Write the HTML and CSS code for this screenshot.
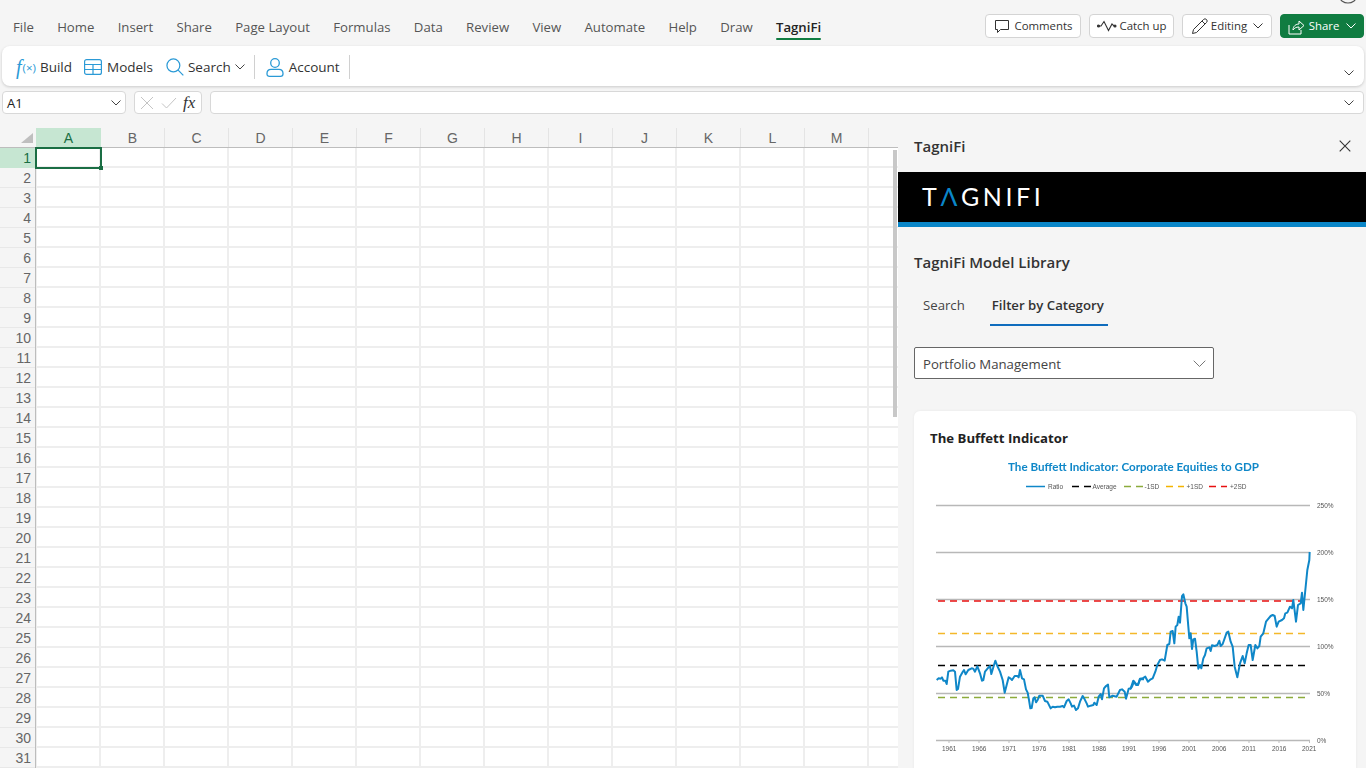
FILE: index.html
```html
<!DOCTYPE html>
<html lang="en">
<head>
<meta charset="utf-8">
<title>TagniFi - Excel</title>
<link rel="stylesheet" href="styles.css">
</head>
<body>
<div class="app">
  <svg class="corner-glyph" width="24" height="6" viewBox="0 0 24 6"><ellipse cx="12" cy="-3" rx="8" ry="6" fill="none" stroke="#555" stroke-width="1.2"/></svg>
  <header class="topbar">
    <nav class="tabs">
      <span class="tab">File</span><span class="tab">Home</span><span class="tab">Insert</span><span class="tab">Share</span><span class="tab">Page Layout</span><span class="tab">Formulas</span><span class="tab">Data</span><span class="tab">Review</span><span class="tab">View</span><span class="tab">Automate</span><span class="tab">Help</span><span class="tab">Draw</span><span class="tab tab-active">TagniFi</span>
    </nav>
    <div class="actions">
      <button class="act act-comments">
        <svg width="16" height="16" viewBox="0 0 16 16" fill="none" stroke="#333" stroke-width="1"><path d="M1.5 2.5h13v9H6.5l-3 3v-3h-2z"/></svg><span>Comments</span></button>
      <button class="act act-catch">
        <svg width="20" height="12" viewBox="0 0 20 12" fill="none" stroke="#333" stroke-width="1.1"><path d="M1 6h3l3-4.5 4.5 9L15 4l2 2h2"/><circle cx="1.5" cy="6" r="1" fill="#333"/><circle cx="18" cy="6" r="1" fill="#333"/></svg><span>Catch up</span></button>
      <button class="act act-edit">
        <svg width="17" height="17" viewBox="0 0 17 17" fill="none" stroke="#333" stroke-width="1"><path d="M1.5 15.500l1-4L12.500 1.500a1.600 1.600 0 0 1 3 3L5.500 14.500z"/><path d="M11 3l3 3"/></svg><span>Editing</span><svg class="chev" width="10" height="6" viewBox="0 0 10 6" fill="none" stroke="#333"><path d="M.5.5 5 5 9.500.5"/></svg></button>
      <button class="act act-share">
        <svg width="17" height="17" viewBox="0 0 17 17" fill="none" stroke="#fff" stroke-width="1"><path d="M1 7v9h12v-4"/><path d="M5 12c0-4 3-6 6-6V3l5 4.500-5 4.500V9c-3 0-4.500 1-6 3z"/></svg><span>Share</span><svg class="chev" width="10" height="6" viewBox="0 0 10 6" fill="none" stroke="#fff"><path d="M.5.5 5 5 9.500.5"/></svg></button>
    </div>
  </header>

  <section class="ribbon">
    <div class="rib-item rib-build"><span class="fx-icon"><i class="fx-f">f</i><span class="fx-x">(×)</span></span>Build</div>
    <div class="rib-item rib-models">
      <svg width="18" height="16" viewBox="0 0 18 16" fill="none" stroke="#2b9ad6" stroke-width="1.2"><rect x=".6" y=".6" width="16.800" height="14.800" rx="2"/><path d="M.6 5.500h16.800M.6 10.500h16.800M9 5.500v9.900"/></svg>Models</div>
    <div class="rib-item rib-search">
      <svg width="18" height="18" viewBox="0 0 19 19" fill="none" stroke="#2b9ad6" stroke-width="1.300"><circle cx="7.800" cy="7.800" r="6.800"/><path d="M12.800 12.800l5.500 5.500"/></svg>Search<svg class="rib-chev" width="10" height="6" viewBox="0 0 10 6" fill="none" stroke="#444"><path d="M.5.5 5 5 9.500.5"/></svg></div>
    <span class="rib-div"></span>
    <div class="rib-item rib-account">
      <svg width="18" height="19" viewBox="0 0 18 19" fill="none" stroke="#2b9ad6" stroke-width="1.300"><circle cx="9" cy="5" r="4.300"/><path d="M1 15.500c0-3 2-4.200 4-4.200h8c2 0 4 1.200 4 4.200v.5c0 1.500-1 2.300-2.500 2.300h-11C2 18.300 1 17.500 1 16z"/></svg>Account</div>
    <span class="rib-div rib-div-last"></span>
    <svg class="rib-more" width="10" height="6" viewBox="0 0 10 6" fill="none" stroke="#444"><path d="M.5.5 5 5 9.500.5"/></svg>
  </section>

  <section class="formula">
    <div class="namebox"><span>A1</span><svg width="10" height="6" viewBox="0 0 10 6" fill="none" stroke="#444"><path d="M.5.5 5 5 9.500.5"/></svg></div>
    <div class="fxbox">
      <svg width="14" height="14" viewBox="0 0 14 14" fill="none" stroke="#c4c4c4"><path d="M1 1l12 12M13 1 1 13"/></svg>
      <svg width="16" height="12" viewBox="0 0 16 12" fill="none" stroke="#c4c4c4"><path d="M1 6.500 5.500 11 15 1"/></svg>
      <span class="fxbox-fx">fx</span>
    </div>
    <div class="finput"><svg width="10" height="6" viewBox="0 0 10 6" fill="none" stroke="#444"><path d="M.5.5 5 5 9.500.5"/></svg></div>
  </section>

  <main class="workspace">
    <section class="sheet">
      <div class="colhead">
        <div class="corner"><span class="corner-tri"></span></div>
        <div class="col col-sel">A</div><div class="col">B</div><div class="col">C</div><div class="col">D</div><div class="col">E</div><div class="col">F</div><div class="col">G</div><div class="col">H</div><div class="col">I</div><div class="col">J</div><div class="col">K</div><div class="col">L</div><div class="col">M</div>
      </div>
      <div class="sheetbody">
        <div class="rowhead">
          <div class="row row-sel">1</div><div class="row">2</div><div class="row">3</div><div class="row">4</div><div class="row">5</div><div class="row">6</div><div class="row">7</div><div class="row">8</div><div class="row">9</div><div class="row">10</div><div class="row">11</div><div class="row">12</div><div class="row">13</div><div class="row">14</div><div class="row">15</div><div class="row">16</div><div class="row">17</div><div class="row">18</div><div class="row">19</div><div class="row">20</div><div class="row">21</div><div class="row">22</div><div class="row">23</div><div class="row">24</div><div class="row">25</div><div class="row">26</div><div class="row">27</div><div class="row">28</div><div class="row">29</div><div class="row">30</div><div class="row">31</div>
        </div>
        <div class="cells">
          <div class="selection"><span class="handle"></span></div>
          <div class="vscroll"></div>
        </div>
      </div>
    </section>

    <aside class="pane">
      <div class="pane-head"><span class="pane-title">TagniFi</span>
        <svg width="12" height="12" viewBox="0 0 12 12" fill="none" stroke="#333" stroke-width="1.100"><path d="M.7.7l10.600 10.600M11.300.7.700 11.300"/></svg></div>
      <div class="banner"><span class="logo">T<span class="logo-a">Λ</span>GNIFI</span></div>
      <h2 class="lib-title">TagniFi Model Library</h2>
      <div class="pivot"><span class="pivot-item">Search</span><span class="pivot-item pivot-on">Filter by Category</span></div>
      <div class="select"><span>Portfolio Management</span><svg width="13" height="8" viewBox="0 0 13 8" fill="none" stroke="#777"><path d="M.7.7l5.800 5.800L12.300.7"/></svg></div>
      <article class="card">
        <h3 class="card-title">The Buffett Indicator</h3>
        <svg class="chart" width="410" height="310" viewBox="930 458 410 310">
          <text class="c-title" x="1008" y="471" textLength="251" lengthAdjust="spacingAndGlyphs">The Buffett Indicator: Corporate Equities to GDP</text>
          <g class="legend">
            <path stroke="#0f87c8" stroke-width="1.500" d="M1026 486.500h19"/>
            <path stroke="#000" stroke-width="1.300" d="M1072 486.500h7M1084 486.500h7"/>
            <path stroke="#8cab3c" stroke-width="1.300" d="M1124 486.500h7M1136 486.500h7"/>
            <path stroke="#f4b400" stroke-width="1.300" d="M1166 486.500h7M1178 486.500h6"/>
            <path stroke="#e81010" stroke-width="1.300" d="M1209 486.500h7M1221 486.500h6"/>
            <text class="c-leg" x="1048" y="489">Ratio</text>
            <text class="c-leg" x="1092.500" y="489">Average</text>
            <text class="c-leg" x="1144.500" y="489">-1SD</text>
            <text class="c-leg" x="1186.500" y="489">+1SD</text>
            <text class="c-leg" x="1230" y="489">+2SD</text>
          </g>
          <path stroke="#b8b8b8" stroke-width="1.300" fill="none" d="M936 505.500h374M936 552.500h374M936 599.500h374M936 646.500h374M936 693.500h374M936 740.500h374"/>
          <path stroke="#bdbdbd" stroke-width="1" fill="none" d="M949 740v3M979 740v3M1009 740v3M1039 740v3M1069 740v3M1099 740v3M1129 740v3M1159 740v3M1189 740v3M1219 740v3M1249 740v3M1279 740v3M1309.500 740v3"/>
          <g class="dashes">
            <path stroke="#e81010" d="M938 601h372"/>
            <path stroke="#f4b82a" d="M938 633.500h372"/>
            <path stroke="#000" d="M938 665.500h372"/>
            <path stroke="#8cab3c" d="M938 697.500h372"/>
          </g>
          <g transform="translate(920 590) scale(.33333)">
            <polyline class="c-line" points="50,270 56,265 62,266 66,262 70,272 76,272 80,282 85,245 92,242 100,241 105,245 110,300 114,297 120,260 128,246 132,240 137,253 145,240 155,235 160,236 165,245 172,229 180,250 186,272 190,270 195,245 205,233 210,228 214,252 220,232 226,212 232,228 240,245 248,270 254,308 260,285 266,262 272,266 276,270 284,258 292,258 296,262 300,240 306,265 312,268 318,298 323,308 327,330 331,355 335,354 340,325 344,322 348,337 353,330 358,317 368,317 375,333 382,335 392,355 398,350 405,352 412,350 420,350 428,348 432,352 440,333 446,328 452,340 456,350 462,347 468,360 474,355 480,335 488,318 494,328 500,340 504,350 512,347 520,345 523,338 530,345 536,320 542,312 546,328 552,295 558,288 564,284 568,322 578,317 590,320 600,300 606,298 614,305 618,326 626,296 632,295 640,272 648,282 654,284 660,268 672,268"/>
          </g>
          <g transform="translate(1130 570) scale(.33333)">
            <polyline class="c-line" points="0,358 6,350 12,335 18,345 24,345 30,326 38,325 46,320 54,335 62,328 68,325 76,305 82,285 90,270 96,268 104,272 112,225 118,222 122,185 128,183 133,220 137,170 142,165 146,140 150,158 156,78 160,73 166,100 170,110 175,170 178,205 182,190 186,237 190,208 195,206 200,245 205,296 210,285 214,295 220,265 225,255 230,235 238,232 242,243 246,226 254,228 262,225 268,212 272,228 278,222 290,188 295,185 302,215 308,230 314,290 322,322 330,280 338,258 344,280 350,250 356,225 362,225 368,270 376,225 382,235 388,228 392,200 400,190 408,155 416,145 422,138 428,135 434,138 440,170 446,155 456,150 462,145 466,130 472,128 480,110 486,115 490,90 498,155 504,105 512,100 516,68 520,120 526,60 532,0 538,-30 539,-54"/>
          </g>
          <g class="c-axis">
            <text x="1317" y="507.500">250%</text><text x="1317" y="554.500">200%</text><text x="1317" y="601.500">150%</text><text x="1317" y="648.500">100%</text><text x="1317" y="695.500">50%</text><text x="1317" y="742.500">0%</text>
            <text x="942" y="751">1961</text><text x="972" y="751">1966</text><text x="1002" y="751">1971</text><text x="1032" y="751">1976</text><text x="1062" y="751">1981</text><text x="1092" y="751">1986</text><text x="1122" y="751">1991</text><text x="1152" y="751">1996</text><text x="1182" y="751">2001</text><text x="1212" y="751">2006</text><text x="1242" y="751">2011</text><text x="1272" y="751">2016</text><text x="1302" y="751">2021</text>
          </g>
        </svg>
      </article>
    </aside>
  </main>
</div>
</body>
</html>
```
FILE: styles.css
```css
* { box-sizing: border-box; }
html, body { margin: 0; height: 100%; overflow: hidden; }
body { background: #f5f5f5; font-family: "Open Sans", "Noto Sans", sans-serif; color: #333; }
.app { width: 1366px; height: 768px; display: flex; flex-direction: column; overflow: hidden; position: relative; }
.corner-glyph { position: absolute; right: 6px; top: 0; }

/* Top bar */
.topbar { height: 46px; flex: none; display: flex; align-items: flex-start; justify-content: space-between; padding: 14px 2px 0 13px; }
.tabs { display: flex; gap: 23.250px; font-size: 13.200px; color: #555; }
.tab { height: 25px; line-height: 26px; position: relative; white-space: nowrap; }
.tab-active { color: #222; font-weight: 600; }
.tab-active::after { content: ""; position: absolute; left: 0; right: 0; bottom: -1px; height: 2px; background: #107c41; border-radius: 1px; }
.actions { display: flex; gap: 8px; }
.act { height: 24px; display: flex; align-items: center; gap: 5px; padding: 0; font: inherit; font-size: 11.400px; color: #333; background: #fff; border: 1px solid #d4d4d4; border-radius: 4px; justify-content: center; white-space: nowrap; }
.act span { position: relative; top: -1px; }
.act-comments { width: 96px; }
.act-catch { width: 85px; gap: 3px; }
.act-edit { width: 90px; gap: 3px; }
.act-edit .chev, .act-share .chev { margin-left: 3px; }
.act-share { width: 84px; background: #107c41; border-color: #107c41; color: #fff; gap: 4px; }

/* Ribbon */
.ribbon { height: 40px; flex: none; margin: 0 2px; background: #fff; border-radius: 8px; box-shadow: 0 1px 3px rgba(0,0,0,.18); display: flex; align-items: center; padding: 2px 0 0 14px; position: relative; font-size: 13.500px; color: #333; }
.rib-item { display: flex; align-items: center; white-space: nowrap; }
.rib-build { gap: 4px; }
.rib-models { gap: 5px; margin-left: 12px; }
.rib-search { gap: 4px; margin-left: 13px; }
.rib-chev { margin-left: 0; }
.rib-div { width: 1px; height: 24px; background: #d0d0d0; margin-left: 9px; }
.rib-div-last { margin-left: 9px; }
.rib-account { gap: 5px; margin-left: 11px; }
.fx-icon { color: #2b9ad6; display: flex; align-items: center; }
.fx-f { font-family: "Liberation Serif", serif; font-size: 20px; line-height: 20px; }
.fx-x { font-size: 11.500px; margin-left: 1px; }
.rib-more { position: absolute; right: 10px; top: 24px; }

/* Formula bar */
.formula { height: 42px; flex: none; display: flex; padding: 5px 2px 14px; gap: 8px; }
.namebox, .fxbox, .finput { background: #fff; border: 1px solid #d8d8d8; border-radius: 4px; display: flex; align-items: center; }
.namebox { width: 124px; justify-content: space-between; padding: 0 4px; font-size: 13px; color: #222; }
.fxbox { width: 68px; gap: 7px; padding-left: 5px; }
.fxbox-fx { font-family: "Liberation Serif", serif; font-style: italic; font-size: 17px; color: #333; margin-left: -1px; }
.finput { flex: 1; justify-content: flex-end; padding-right: 9px; }

/* Workspace */
.workspace { flex: 1; min-height: 0; display: flex; }
.sheet { width: 898px; flex: none; display: flex; flex-direction: column; font-family: "Liberation Sans", Arial, sans-serif; font-size: 14px; color: #666; overflow: hidden; }
.colhead { height: 20px; flex: none; display: flex; border-bottom: 1px solid #bdbdbd; }
.corner { width: 37px; flex: none; position: relative; }
.corner-tri { position: absolute; left: 21px; top: 5px; width: 12px; height: 10px; background: #bfbfbf; clip-path: polygon(100% 0, 100% 100%, 0 100%); }
.col { width: 64px; flex: none; text-align: center; line-height: 20px; border-right: 1px solid #e4e4e4; }
.col-sel { background: #c6e6d2; color: #1a6e44; border-right-color: #c6e6d2; box-shadow: -1px 0 0 #c6e6d2; }
.sheetbody { flex: 1; min-height: 0; display: flex; }
.rowhead { width: 36px; flex: none; border-right: 1px solid #bdbdbd; }
.row { height: 20px; line-height: 20px; text-align: right; padding-right: 4px; border-bottom: 1px solid #e8e8e8; }
.row-sel { background: #c6e6d2; color: #1a6e44; border-bottom-color: #c6e6d2; }
.cells { flex: 1; position: relative; background-color: #fff;
  background-image:
    linear-gradient(90deg, transparent 62px, #eeeeee 62px),
    linear-gradient(180deg, transparent 18px, #eeeeee 18px);
  background-size: 64px 20px, 64px 20px;
  background-position: 1px 0, 0 0; }
.selection { position: absolute; left: -1px; top: -1px; width: 67px; height: 22px; border: 2px solid #1a6e44; }
.handle { position: absolute; right: -3px; bottom: -3px; width: 4px; height: 4px; background: #1a6e44; }
.vscroll { position: absolute; right: 1px; top: 2px; width: 4px; height: 267px; background: #c8c8c8; }

/* Task pane */
.pane { flex: 1; min-width: 0; background: #f5f5f5; display: flex; flex-direction: column; overflow: hidden; }
.pane-head { height: 44px; flex: none; padding: 0 15px 8px 16px; display: flex; align-items: center; justify-content: space-between; }
.pane-title { font-size: 15px; font-weight: 600; color: #333; }
.banner { height: 55px; flex: none; background: #000; border-bottom: 5px solid #0a86c8; padding: 0 0 2px 24px; display: flex; align-items: center; }
.logo { font-family: "Lato", sans-serif; font-size: 25px; font-weight: 400; letter-spacing: 3.600px; color: #fff; line-height: 48px; }
.logo-a { color: #0a86c8; }
.lib-title { margin: 24px 16px 0; height: 22px; flex: none; line-height: 22px; font-size: 15px; font-weight: 600; color: #333; }
.pivot { height: 32px; flex: none; margin: 22px 0 0 16px; display: flex; font-size: 13.200px; }
.pivot-item { padding: 0 0 0 9px; line-height: 20px; color: #444; }
.pivot-on { margin-left: 25px; padding: 0 2px; width: 118px; font-weight: 600; color: #333; border-bottom: 2px solid #0f6cbd; height: 31px; white-space: nowrap; }
.select { width: 300px; height: 32px; flex: none; margin: 20px 0 0 16px; background: #fff; border: 1px solid #666; border-radius: 2px; display: flex; align-items: center; justify-content: space-between; padding: 1px 7px 0 8px; font-size: 13.200px; color: #444; }
.card { margin: 32px 10px 0 16px; height: 420px; flex: none; background: #fff; border-radius: 6px; box-shadow: 0 0 3px rgba(0,0,0,.06); padding: 0 16px; }
.card-title { margin: 0; height: 47px; line-height: 54px; font-size: 13.200px; font-weight: 700; color: #222; }
.chart { display: block; filter: blur(.3px); }
.c-title { font-family: "Lato", sans-serif; font-weight: 700; font-size: 12px; fill: #0f87c8; }
.c-leg { font-family: "Liberation Sans", sans-serif; font-size: 6.500px; fill: #555; }
.c-axis text { font-family: "Liberation Sans", sans-serif; font-size: 6.500px; fill: #555; }
.dashes path { stroke-width: 1.700; stroke-dasharray: 7 5; fill: none; }
.c-line { fill: none; stroke: #0f87c8; stroke-width: 6; stroke-linejoin: round; }
```
